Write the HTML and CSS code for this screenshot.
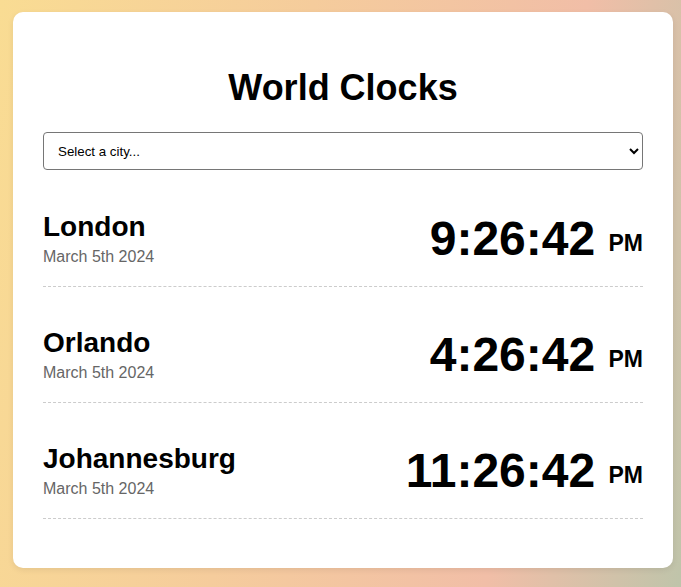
FILE: index.html
```html
<!DOCTYPE html>
<html>
<head>
<meta charset="utf-8">
<link rel="stylesheet" href="styles.css">
</head>
<body>
<main class="card">
  <h1 class="title">World Clocks</h1>
  <select class="city-select">
    <option>Select a city...</option>
    <option>London</option>
    <option>Orlando</option>
    <option>Johannesburg</option>
  </select>
  <div class="clocks">
    <div class="clock-row">
      <div class="city">
        <div class="city-name">London</div>
        <div class="city-date">March 5th 2024</div>
      </div>
      <div class="time">9:26:42 <span class="ampm">PM</span></div>
    </div>
    <div class="clock-row">
      <div class="city">
        <div class="city-name">Orlando</div>
        <div class="city-date">March 5th 2024</div>
      </div>
      <div class="time">4:26:42 <span class="ampm">PM</span></div>
    </div>
    <div class="clock-row">
      <div class="city">
        <div class="city-name">Johannesburg</div>
        <div class="city-date">March 5th 2024</div>
      </div>
      <div class="time">11:26:42 <span class="ampm">PM</span></div>
    </div>
  </div>
</main>
</body>
</html>
```
FILE: styles.css
```css
html, body {
  margin: 0;
  height: 100%;
}
body {
  font-family: "Liberation Sans", Arial, sans-serif;
  background: linear-gradient(100deg, #f9dc93 0%, #f5cc9c 40%, #f1bea7 75%, #bfc4aa 100%);
  padding: 12px 8px 0 13px;
  box-sizing: border-box;
}
.card {
  background: #fff;
  border-radius: 10px;
  width: 660px;
  height: 556px;
  box-sizing: border-box;
  padding: 30px;
  box-shadow: 0 2px 6px rgba(0,0,0,0.08);
}
.title {
  margin: 25px 0 0;
  font-size: 36px;
  line-height: 41px;
  text-align: center;
  color: #000;
}
.city-select {
  display: block;
  margin-top: 24px;
  width: 100%;
  height: 38px;
  box-sizing: border-box;
  padding: 0 10px;
  font-family: "Liberation Sans", Arial, sans-serif;
  font-size: 13.333px;
  color: #000;
  background: #fff;
  border: 1px solid #767676;
  border-radius: 4px;
}
.clocks {
  margin-top: 1px;
}
.clock-row {
  display: flex;
  justify-content: space-between;
  align-items: center;
  padding: 40px 0 20px;
  border-bottom: 1px dashed #ccc;
}
.city-name {
  font-size: 28px;
  line-height: 32px;
  font-weight: bold;
  color: #000;
}
.city-date {
  margin-top: 5px;
  font-size: 16px;
  line-height: 18px;
  color: #666;
}
.time {
  padding-top: 1px;
  font-size: 48px;
  line-height: 54px;
  font-weight: bold;
  color: #000;
}
.ampm {
  font-size: 23px;
  line-height: 1;
  vertical-align: 4px;
}
```
